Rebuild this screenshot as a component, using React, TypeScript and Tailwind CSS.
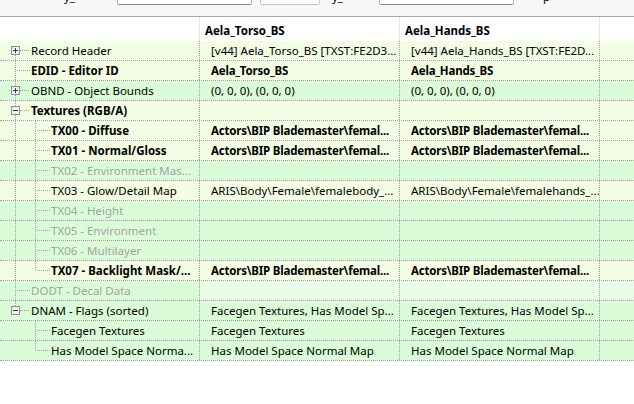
import React from 'react';

type Row = {
  label: string;
  level: 0 | 1;
  box?: '+' | '-';
  bold?: boolean;
  dim?: boolean;
  v1?: string;
  v2?: string;
  vBold?: boolean;
  bg: 'y' | 'g';
  valBg?: string;
  trunk: 'full' | 'top' | 'bottom' | 'none';
  child?: 'full' | 'top';
};

const ACT = 'Actors\\BIP Blademaster\\femal...';

const rows: Row[] = [
  { label: 'Record Header', level: 0, box: '+', v1: '[v44] Aela_Torso_BS [TXST:FE2D3...', v2: '[v44] Aela_Hands_BS [TXST:FE2D...', bg: 'y', trunk: 'bottom' },
  { label: 'EDID - Editor ID', level: 0, bold: true, v1: 'Aela_Torso_BS', v2: 'Aela_Hands_BS', vBold: true, bg: 'y', trunk: 'full' },
  { label: 'OBND - Object Bounds', level: 0, box: '+', v1: '(0, 0, 0), (0, 0, 0)', v2: '(0, 0, 0), (0, 0, 0)', bg: 'g', trunk: 'full' },
  { label: 'Textures (RGB/A)', level: 0, box: '-', bold: true, bg: 'y', trunk: 'full' },
  { label: 'TX00 - Diffuse', level: 1, bold: true, v1: ACT, v2: ACT, vBold: true, bg: 'y', trunk: 'full', child: 'full' },
  { label: 'TX01 - Normal/Gloss', level: 1, bold: true, v1: ACT, v2: ACT, vBold: true, bg: 'y', trunk: 'full', child: 'full' },
  { label: 'TX02 - Environment Mas...', level: 1, dim: true, bg: 'g', trunk: 'full', child: 'full' },
  { label: 'TX03 - Glow/Detail Map', level: 1, v1: 'ARIS\\Body\\Female\\femalebody_...', v2: 'ARIS\\Body\\Female\\femalehands_...', bg: 'y', trunk: 'full', child: 'full' },
  { label: 'TX04 - Height', level: 1, dim: true, bg: 'g', trunk: 'full', child: 'full' },
  { label: 'TX05 - Environment', level: 1, dim: true, bg: 'g', trunk: 'full', child: 'full' },
  { label: 'TX06 - Multilayer', level: 1, dim: true, bg: 'g', trunk: 'full', child: 'full' },
  { label: 'TX07 - Backlight Mask/...', level: 1, bold: true, v1: ACT, v2: ACT, vBold: true, bg: 'y', trunk: 'full', child: 'top' },
  { label: 'DODT - Decal Data', level: 0, dim: true, bg: 'g', valBg: 'bg-[#e9fde9]', trunk: 'full' },
  { label: 'DNAM - Flags (sorted)', level: 0, box: '-', v1: 'Facegen Textures, Has Model Sp...', v2: 'Facegen Textures, Has Model Sp...', bg: 'g', trunk: 'top' },
  { label: 'Facegen Textures', level: 1, v1: 'Facegen Textures', v2: 'Facegen Textures', bg: 'g', trunk: 'none', child: 'full' },
  { label: 'Has Model Space Norma...', level: 1, v1: 'Has Model Space Normal Map', v2: 'Has Model Space Normal Map', bg: 'g', trunk: 'none', child: 'top' },
];

const DOT = { stroke: '#a0a0a0', strokeWidth: 1, strokeDasharray: '1 1', shapeRendering: 'crispEdges' as const };

function TreeGlyph({ r }: { r: Row }) {
  const w = r.level === 0 ? 31 : 51;
  return (
    <svg width={w} height={19} className="shrink-0">
      {r.trunk === 'full' && <line x1={15.5} y1={0} x2={15.5} y2={19} {...DOT} />}
      {r.trunk === 'bottom' && <line x1={15.5} y1={10} x2={15.5} y2={19} {...DOT} />}
      {r.trunk === 'top' && <line x1={15.5} y1={0} x2={15.5} y2={9} {...DOT} />}
      {r.level === 0 && <line x1={r.box ? 20 : 17} y1={9.5} x2={30} y2={9.5} {...DOT} />}
      {r.child === 'full' && <line x1={35.5} y1={0} x2={35.5} y2={19} {...DOT} />}
      {r.child === 'top' && <line x1={35.5} y1={0} x2={35.5} y2={10} {...DOT} />}
      {r.level === 1 && <line x1={37} y1={9.5} x2={50} y2={9.5} {...DOT} />}
      {r.box && (
        <g shapeRendering="crispEdges">
          <rect x={11.5} y={5.5} width={8} height={8} fill="#f1f1f1" stroke="#8e8f8f" />
          <line x1={13} y1={9.5} x2={18} y2={9.5} stroke="#333a45" />
          {r.box === '+' && <line x1={15.5} y1={7} x2={15.5} y2={12} stroke="#333a45" />}
        </g>
      )}
    </svg>
  );
}

function DataRow({ r }: { r: Row }) {
  const bg = r.bg === 'y' ? 'bg-[#f3fde4]' : 'bg-[#dbfcd9]';
  const vbg = r.valBg ?? '';
  const txt = r.dim ? 'text-[#a3a3a3]' : 'text-black';
  const vb = r.vBold ? 'font-bold tracking-[-0.2px]' : '';
  return (
    <div className={`flex h-[20px] border-b border-dotted border-[#a0a0a0] ${bg}`}>
      <div className={`w-[200px] shrink-0 flex items-center border-r border-dotted border-[#a0a0a0] overflow-hidden ${txt} ${r.bold ? 'font-bold' : ''}`}>
        <TreeGlyph r={r} />
        <span className="whitespace-nowrap">{r.label}</span>
      </div>
      <div className={`w-[200px] shrink-0 flex items-center pl-[11px] border-r border-dotted border-[#a0a0a0] overflow-hidden whitespace-nowrap ${vbg} ${vb}`}>
        {r.v1}
      </div>
      <div className={`w-[200px] shrink-0 flex items-center pl-[11px] border-r border-dotted border-[#a0a0a0] overflow-hidden whitespace-nowrap ${vbg} ${vb}`}>
        {r.v2}
      </div>
      <div className={`flex-1 ${vbg}`} />
    </div>
  );
}

export default function App() {
  return (
    <div className="w-[634px] h-[404px] overflow-hidden bg-white text-[11.5px] leading-[16px] text-black font-['Noto_Sans',sans-serif]">
      <div className="h-[17px] bg-[#f7f7f7] border-b border-[#a9a9a9] flex items-start overflow-hidden">
        <span className="ml-[64px] mt-[-11px] w-[53px] whitespace-nowrap">y_</span>
        <div className="mt-[-6px] w-[135px] h-[11px] bg-white border border-[#b9b9b9] border-b-[#8a8a8a] rounded-[2px]" />
        <div className="ml-[8px] mt-[-6px] w-[60px] h-[11px] bg-[#fdfdfd] border border-[#c6c6c6] rounded-[2px]" />
        <span className="ml-[12px] mt-[-11px] w-[47px] whitespace-nowrap">y_</span>
        <div className="mt-[-6px] w-[135px] h-[11px] bg-white border border-[#b9b9b9] border-b-[#8a8a8a] rounded-[2px]" />
        <span className="ml-[29px] mt-[-11px] whitespace-nowrap">p</span>
      </div>
      <div className="flex h-[24px] bg-white font-bold">
        <div className="w-[200px] shrink-0 border-r border-[#e5e5e5]" />
        <div className="w-[200px] shrink-0 border-r border-[#e5e5e5] flex items-center pl-[5px] pt-[3px]">Aela_Torso_BS</div>
        <div className="w-[200px] shrink-0 border-r border-[#e5e5e5] flex items-center pl-[5px] pt-[3px]">Aela_Hands_BS</div>
        <div className="flex-1" />
      </div>
      {rows.map((r, i) => (
        <DataRow key={i} r={r} />
      ))}
    </div>
  );
}
